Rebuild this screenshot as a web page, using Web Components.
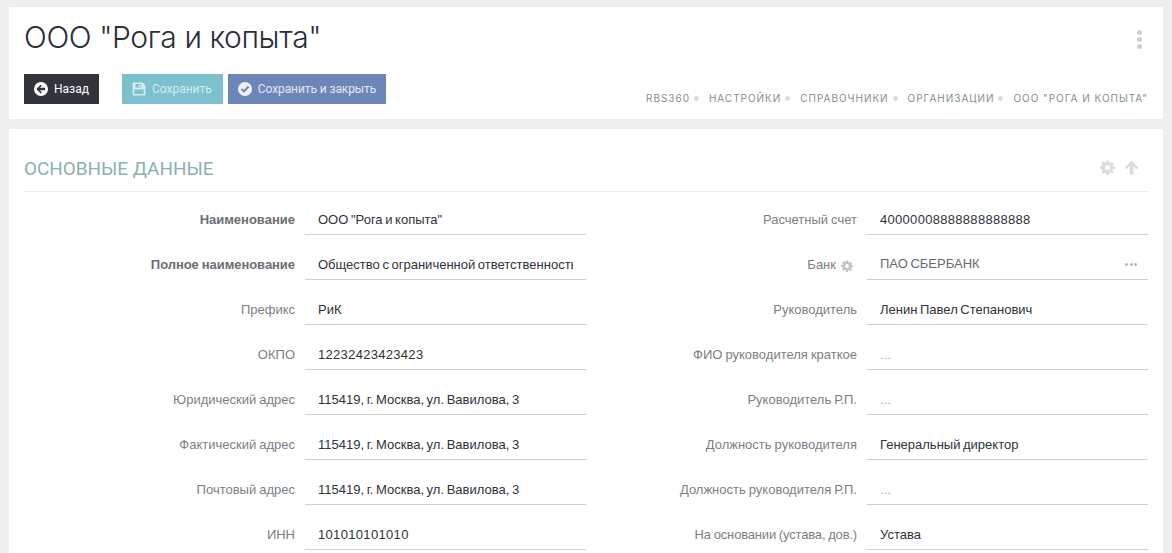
<!DOCTYPE html>
<html lang="ru"><head><meta charset="utf-8"><title>ООО "Рога и копыта"</title>
<style>
html,body{margin:0;height:553px;overflow:hidden;background:#eeeeee}
body{font-family:"Liberation Sans",Roboto,sans-serif}
</style></head><body>
<template id="t-page"><style>
:host{display:flex;flex-direction:column;gap:10px;padding:7px 9px 0}
</style><slot></slot></template>

<template id="t-head"><style>
:host{display:block;background:#fff;height:112px;box-sizing:border-box;padding:0 15px;position:relative}
h1{margin:0;padding-top:12px;height:55px;box-sizing:border-box;font:300 30px/36px Inter,"Open Sans",sans-serif;letter-spacing:-.38px;color:#2b2f38}
.bar{display:flex;align-items:flex-start;justify-content:space-between}
.btns{display:flex;gap:5px;margin-top:12px}
.crumbs{margin-top:30px}
.dots{position:absolute;right:21px;top:23px;display:flex;flex-direction:column;gap:2px}
.dots i{width:5px;height:5px;border-radius:50%;background:#cfcfcf;display:block}
</style>
<h1><slot name="title"></slot></h1>
<div class="dots"><i></i><i></i><i></i></div>
<div class="bar"><div class="btns"><slot name="btn"></slot></div><div class="crumbs"><slot name="crumbs"></slot></div></div>
</template>

<template id="t-btn"><style>
:host{display:inline-flex;align-items:center;height:30px;box-sizing:border-box;padding:0 10px;gap:6px;font:400 12px/30px Roboto,sans-serif;color:#fff;background:var(--bg,#333)}
svg{width:14px;height:14px;display:block;flex:none}
</style><slot name="icon"></slot><slot></slot></template>

<template id="t-crumbs"><style>
:host{display:flex;align-items:center;font:400 10px/12px Inter,"Open Sans",sans-serif;letter-spacing:.97px;color:#7f8f90;white-space:nowrap}
</style><slot></slot></template>

<template id="t-sep"><style>
:host{display:inline-block;width:5px;height:5px;border-radius:50%;background:#dcdcdc;margin:0 10px 0 4px}
</style></template>

<template id="t-card"><style>
:host{display:block;background:#fff;padding:0 15px;height:424px;overflow:hidden}
header{display:flex;justify-content:space-between;align-items:center;height:62px;border-bottom:1px solid #eee;box-sizing:content-box}
h2{margin:18px 0 0;font:400 18.9px/24px Roboto,sans-serif;color:#87b4ab;text-transform:uppercase}
.tools{display:flex;gap:9px;margin:14px 9px 0 0}
.grid{display:grid;grid-template-columns:562px 562px}
</style>
<header><h2><slot name="title"></slot></h2><div class="tools"><slot name="tools"></slot></div></header>
<div class="grid"><slot></slot></div></template>

<template id="t-field"><style>
:host{display:grid;grid-template-columns:271px 281px;column-gap:10px;height:45px;font:400 13px/16px "Liberation Sans",sans-serif}
.l{display:flex;justify-content:flex-end;align-items:flex-start;gap:5px;padding-top:20px;color:#7b7f85;height:43px;box-sizing:border-box;word-spacing:-.6px}
:host([strong]) .l{font-weight:700;color:#6b6e73}
.v{height:43px;box-sizing:border-box;border-bottom:1px solid #cfcfcf;padding:20px 13px 0;color:#2f3238;white-space:nowrap;overflow:hidden;position:relative;line-height:16px;word-spacing:-1px;letter-spacing:var(--ls,0)}
:host([placeholder]) .v{color:#a6abb0}
:host([more]) .v{color:#666a70}
:host([more]) .t{margin-top:-1px}
.t{display:block;overflow:hidden;height:18px}
::slotted(svg){flex:none;margin:3px 4px 0 0}
.more{position:absolute;right:11px;top:26px;display:flex;gap:1.5px}
.more i{width:3px;height:3px;border-radius:50%;background:#b5b5b5}
</style>
<div class="l"><span><slot name="label"></slot></span><slot name="icon"></slot></div>
<div class="v"><span class="t"><slot></slot></span><span class="more" id="more" hidden></span></div></template>

<svg width="0" height="0" style="position:absolute"><defs>
<symbol id="gear" viewBox="0 0 24 24"><path fill-rule="evenodd" d="M10 1h4l.6 3.1 1.9.8L19.100 3.100l2.800 2.800-1.800 2.600.8 1.900L24 10v4l-3.100.6-.8 1.900 1.800 2.600-2.800 2.800-2.600-1.800-1.900.8L14 24h-4l-.6-3.100-1.900-.8-2.600 1.800-2.800-2.800 1.800-2.600-.8-1.900L0 14v-4l3.100-.6.8-1.900-1.800-2.600 2.800-2.800 2.600 1.800 1.900-.8zM12 8a4 4 0 1 0 0 8 4 4 0 0 0 0-8z"/></symbol>
</defs></svg>

<app-page>
 <app-head>
  <span slot="title">ООО "Рога и копыта"</span>
  <app-btn slot="btn" style="--bg:#31343b;margin-right:18px">
   <svg slot="icon" width="14" height="14" viewBox="0 0 24 24"><path fill="#fff" fill-rule="evenodd" d="M12 0a12 12 0 1 0 0 24 12 12 0 0 0 0-24zM11.500 4.500l2 2L10 10h9v4h-9l3.500 3.500-2 2L4 12z"/></svg>Назад</app-btn>
  <app-btn slot="btn" style="--bg:#7cc1cd;color:#d5edf1;padding-right:11px">
   <svg slot="icon" width="14" height="14" viewBox="0 0 24 24"><path fill="#d5edf1" fill-rule="evenodd" d="M2 1h16l5 5v15a2 2 0 0 1-2 2H3a2 2 0 0 1-2-2V2a1 1 0 0 1 1-1zM6 3.500v6h10v-6zM11.500 4.500h3v4h-3zM4 13v7.500h16V13z"/></svg>Сохранить</app-btn>
  <app-btn slot="btn" style="--bg:#6d86b8;color:#e3e9f3;letter-spacing:-.1px">
   <svg slot="icon" width="14" height="14" viewBox="0 0 24 24"><path fill="#eef2f8" fill-rule="evenodd" d="M12 0a12 12 0 1 0 0 24 12 12 0 0 0 0-24zM10 18.500L4.500 13l2.500-2.500 3 3 7-7L19.500 9z"/></svg>Сохранить и закрыть</app-btn>
  <app-crumbs slot="crumbs">RBS360<app-sep></app-sep>НАСТРОЙКИ<app-sep></app-sep>СПРАВОЧНИКИ<app-sep></app-sep>ОРГАНИЗАЦИИ<app-sep></app-sep>ООО "РОГА И КОПЫТА"</app-crumbs>
 </app-head>
 <app-card>
  <span slot="title">Основные данные</span>
  <svg slot="tools" width="15" height="15" fill="#dcdcdc"><use href="#gear"/></svg>
  <svg slot="tools" width="15" height="15" viewBox="0 0 24 24"><path fill="#dcdcdc" d="M12 1L23 12l-3 3-5-5v13H9V10l-5 5-3-3z"/></svg>
  <app-field strong><span slot="label">Наименование</span>ООО "Рога и копыта"</app-field>
  <app-field style="--ls:.3px"><span slot="label">Расчетный счет</span>40000008888888888888</app-field>
  <app-field strong><span slot="label" style="letter-spacing:-.05px">Полное наименование</span>Общество с ограниченной ответственностью "Рога и копыта"</app-field>
  <app-field more><span slot="label">Банк</span><svg slot="icon" width="12" height="12" fill="#c4c4c4"><use href="#gear"/></svg>ПАО СБЕРБАНК</app-field>
  <app-field><span slot="label">Префикс</span>РиК</app-field>
  <app-field><span slot="label">Руководитель</span>Ленин Павел Степанович</app-field>
  <app-field style="--ls:.3px"><span slot="label">ОКПО</span>12232423423423</app-field>
  <app-field placeholder><span slot="label">ФИО руководителя краткое</span>...</app-field>
  <app-field><span slot="label">Юридический адрес</span>115419, г. Москва, ул. Вавилова, 3</app-field>
  <app-field placeholder><span slot="label">Руководитель Р.П.</span>...</app-field>
  <app-field><span slot="label">Фактический адрес</span>115419, г. Москва, ул. Вавилова, 3</app-field>
  <app-field><span slot="label">Должность руководителя</span>Генеральный директор</app-field>
  <app-field><span slot="label">Почтовый адрес</span>115419, г. Москва, ул. Вавилова, 3</app-field>
  <app-field placeholder><span slot="label">Должность руководителя Р.П.</span>...</app-field>
  <app-field style="--ls:.33px"><span slot="label">ИНН</span>101010101010</app-field>
  <app-field><span slot="label" style="letter-spacing:-.17px">На основании (устава, дов.)</span>Устава</app-field>
 </app-card>
</app-page>
<script>
const reg=(n,id,extra)=>customElements.define(n,class extends HTMLElement{constructor(){super();this.attachShadow({mode:'open'}).appendChild(document.getElementById(id).content.cloneNode(true));}connectedCallback(){extra&&extra(this);}});
reg('app-page','t-page');reg('app-head','t-head');reg('app-btn','t-btn');reg('app-crumbs','t-crumbs');reg('app-sep','t-sep');reg('app-card','t-card');
reg('app-field','t-field',el=>{if(el.hasAttribute('more')){const m=el.shadowRoot.getElementById('more');m.hidden=false;m.innerHTML='<i></i><i></i><i></i>';}});
</script>
</body></html>
